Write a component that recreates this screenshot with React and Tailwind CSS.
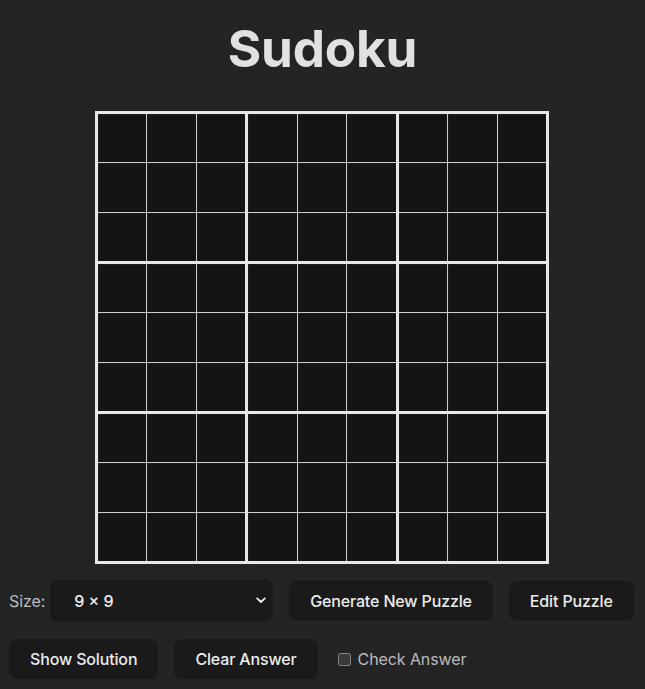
import React from "react";

const boxes = Array.from({ length: 9 });
const cells = Array.from({ length: 9 });

function Btn({ children }) {
  return (
    <button className="h-10 px-5 rounded-lg border border-transparent bg-[#1a1a1a] text-[#ececec] text-base leading-6 font-medium tracking-[-0.15px] whitespace-nowrap">
      {children}
    </button>
  );
}

export default function App() {
  return (
    <div className="min-h-screen w-full bg-[#242424] text-[#e1e1e1] font-['Inter',_'Noto_Sans',_sans-serif]">
      <div className="flex flex-col items-center pt-5">
        <h1 className="text-[51.2px] leading-[56px] font-bold text-[#e1e1e1] tracking-[-0.2px]">Sudoku</h1>
        <div className="mt-[35px] ml-[-1px] w-[454px] h-[453px] border-[3px] border-[#e8e8e8] bg-[#e8e8e8] grid grid-cols-3 grid-rows-3 gap-[3px]">
          {boxes.map((_, b) => (
            <div key={b} className="grid grid-cols-3 grid-rows-3 gap-px bg-[#cccccc]">
              {cells.map((_, c) => (
                <div key={c} className="bg-[#141414] border-l border-t border-[#1c1c1c]" />
              ))}
            </div>
          ))}
        </div>
      </div>
      <div className="mt-4 px-[9px] flex flex-col gap-4">
        <div className="flex items-center h-[42px] gap-4">
          <div className="flex items-center gap-[5px]">
            <span className="text-base text-[#bdbdbd] tracking-[-0.1px]">Size:</span>
            <div className="relative w-[223px] h-[42px] rounded-lg bg-[#1a1a1a] flex items-center pl-6">
              <span className="text-base font-medium text-[#f0f0f0]">9 × 9</span>
              <svg className="absolute right-[7px] top-[17px]" width="10" height="7" viewBox="0 0 10 7">
                <path d="M1.2 1.4 L5 5 L8.8 1.4" fill="none" stroke="#f0f0f0" strokeWidth="1.8" strokeLinecap="round" strokeLinejoin="round" />
              </svg>
            </div>
          </div>
          <Btn>Generate New Puzzle</Btn>
          <Btn>Edit Puzzle</Btn>
        </div>
        <div className="flex items-center h-[42px] gap-4">
          <Btn>Show Solution</Btn>
          <Btn>Clear Answer</Btn>
          <label className="flex items-center gap-[7px] text-base text-[#bbbbbb] tracking-[-0.1px]">
            <input type="checkbox" className="w-[13px] h-[13px] ml-[4px] [color-scheme:dark]" />
            <span>Check Answer</span>
          </label>
        </div>
      </div>
    </div>
  );
}
